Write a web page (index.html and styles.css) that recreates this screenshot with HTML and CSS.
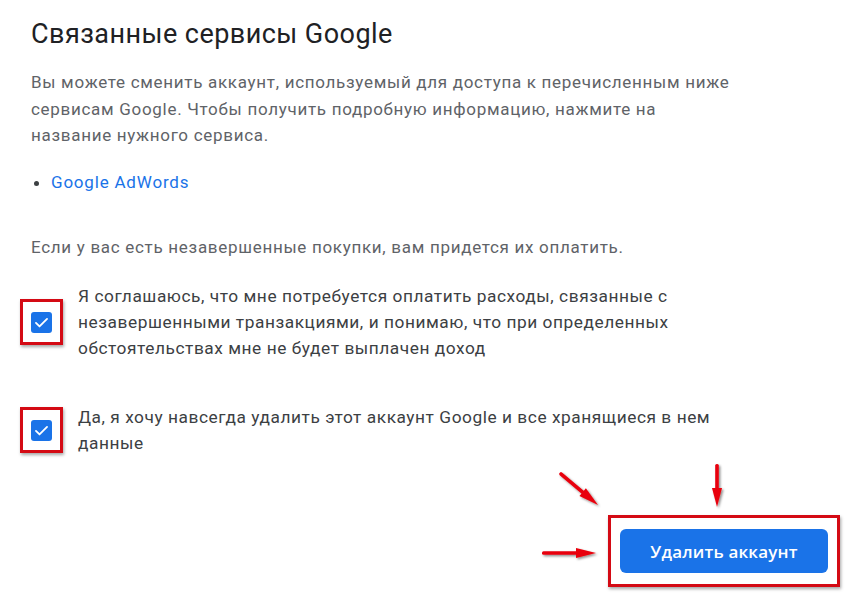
FILE: index.html
```html
<!DOCTYPE html>
<html lang="ru">
<head>
<meta charset="utf-8">
<title>Связанные сервисы Google</title>
<link rel="stylesheet" href="styles.css">
</head>
<body>
<div class="page">
  <h1 class="title">Связанные сервисы Google</h1>
  <p class="desc">Вы можете сменить аккаунт, используемый для доступа к перечисленным ниже сервисам Google. Чтобы получить подробную информацию, нажмите на название нужного сервиса.</p>
  <ul class="services">
    <li><a class="link" href="#">Google AdWords</a></li>
  </ul>
  <p class="desc note">Если у вас есть незавершенные покупки, вам придется их оплатить.</p>

  <div class="check-row first">
    <span class="mark-box">
      <span class="checkbox">
        <svg viewBox="0 0 24 24" width="19" height="19"><path d="M5 12.5l4.5 4.5L19 7.5" fill="none" stroke="#fff" stroke-width="2.3" stroke-linecap="round" stroke-linejoin="round"/></svg>
      </span>
    </span>
    <span class="check-text">Я соглашаюсь, что мне потребуется оплатить расходы, связанные с незавершенными транзакциями, и понимаю, что при определенных обстоятельствах мне не будет выплачен доход</span>
  </div>

  <div class="check-row second">
    <span class="mark-box">
      <span class="checkbox">
        <svg viewBox="0 0 24 24" width="19" height="19"><path d="M5 12.5l4.5 4.5L19 7.5" fill="none" stroke="#fff" stroke-width="2.3" stroke-linecap="round" stroke-linejoin="round"/></svg>
      </span>
    </span>
    <span class="check-text">Да, я хочу навсегда удалить этот аккаунт Google и все хранящиеся в нем данные</span>
  </div>

  <div class="actions">
    <span class="btn-box"><button class="btn">Удалить аккаунт</button></span>
  </div>

  <svg class="arrows" width="858" height="600" viewBox="0 0 858 600">
    <defs>
      <filter id="sh" x="-20%" y="-20%" width="140%" height="140%">
        <feDropShadow dx="1.5" dy="1.5" stdDeviation="1" flood-color="#000" flood-opacity="0.45"/>
      </filter>
    </defs>
    <g filter="url(#sh)" fill="#e8000b">
      <g transform="translate(598 505) rotate(40)">
        <rect x="-50" y="-1.8" width="36" height="3.6" rx="1.5"/>
        <polygon points="0,0 -20,-5 -20,5"/>
      </g>
      <g transform="translate(717 507) rotate(90)">
        <rect x="-43" y="-1.8" width="28" height="3.6" rx="1.5"/>
        <polygon points="0,0 -19,-5 -19,5"/>
      </g>
      <g transform="translate(596 553)">
        <rect x="-54" y="-1.8" width="40" height="3.6" rx="1.5"/>
        <polygon points="0,0 -20,-5 -20,5"/>
      </g>
    </g>
  </svg>
</div>
</body>
</html>
```

FILE: styles.css
```css
html, body {
  margin: 0;
  padding: 0;
  background: #ffffff;
}

.page {
  position: relative;
  width: 858px;
  height: 600px;
  box-sizing: border-box;
  padding: 17px 0 0 31px;
  font-family: Roboto, "Liberation Sans", Arial, sans-serif;
  overflow: hidden;
}

.title {
  margin: 0;
  font-family: Roboto, "Liberation Sans", sans-serif;
  font-weight: 400;
  font-size: 27px;
  line-height: 35px;
  color: #202124;
  letter-spacing: 0.45px;
}

.desc {
  margin: 17px 0 0;
  width: 705px;
  font-size: 17px;
  line-height: 26.5px;
  color: #5f6368;
  letter-spacing: 0.7px;
}

.services {
  margin: 20px 0 0;
  padding-left: 20px;
  font-size: 17px;
  line-height: 26px;
  color: #3c4043;
  letter-spacing: 0.8px;
}

.link {
  color: #1a73e8;
  text-decoration: none;
}

.note {
  margin-top: 39px;
  width: auto;
}

.check-row {
  display: flex;
  align-items: center;
  gap: 15px;
  margin-left: -11px;
}

.check-row.first {
  margin-top: 23px;
}

.check-row.second {
  margin-top: 43px;
}

.mark-box {
  flex: none;
  width: 43px;
  height: 46px;
  box-sizing: border-box;
  border: 3px solid #d40a14;
  box-shadow: 1px 2px 3px rgba(0, 0, 0, 0.35);
  display: flex;
  align-items: center;
  justify-content: center;
}

.checkbox {
  width: 21px;
  height: 21px;
  border-radius: 3px;
  background: #1a73e8;
  display: flex;
  align-items: center;
  justify-content: center;
}

.check-text {
  width: 665px;
  font-size: 17.3px;
  line-height: 26px;
  color: #3c4043;
  letter-spacing: 0.55px;
}

.actions {
  display: flex;
  justify-content: flex-end;
  margin-top: 59px;
  padding-right: 18px;
}

.btn-box {
  display: block;
  padding: 11px 9px;
  border: 3px solid #d40a14;
  box-shadow: 1px 2px 3px rgba(0, 0, 0, 0.35);
}

.btn {
  display: block;
  width: 208px;
  height: 44px;
  border: 0;
  border-radius: 6px;
  background: #1a73e8;
  color: #ffffff;
  font-family: "Open Sans", Roboto, sans-serif;
  font-weight: 600;
  font-size: 17px;
  letter-spacing: 0.2px;
  cursor: pointer;
}

.arrows {
  position: absolute;
  left: 0;
  top: 0;
  pointer-events: none;
}
```
